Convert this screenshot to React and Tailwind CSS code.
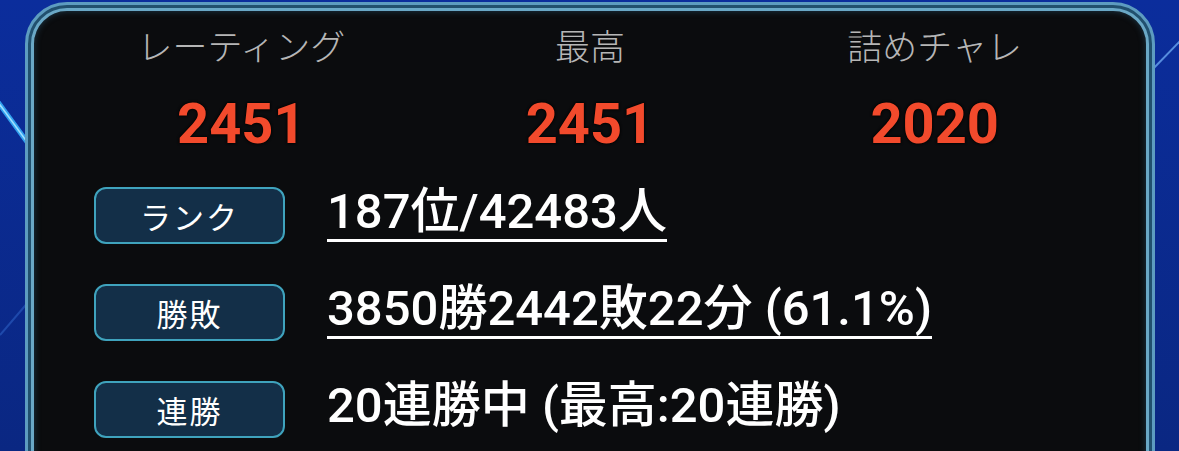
import React from 'react';

const stats = [
  { label: 'レーティング', value: '2451' },
  { label: '最高', value: '2451' },
  { label: '詰めチャレ', value: '2020' },
];

const rows = [
  { label: 'ランク', value: '187位/42483人', link: true },
  { label: '勝敗', value: '3850勝2442敗22分 (61.1%)', link: true },
  { label: '連勝', value: '20連勝中 (最高:20連勝)', link: false },
];

const jp = { fontFamily: '"Noto Sans CJK JP", "Noto Sans", sans-serif' };
const mixed = { fontFamily: 'Roboto, "Noto Sans CJK JP", sans-serif' };

const Backdrop = () => (
  <svg className="absolute inset-0 h-full w-full" viewBox="0 0 1179 451" preserveAspectRatio="none">
    <line x1="-5" y1="98" x2="30" y2="146" stroke="#39b6ff" strokeWidth="5" opacity="0.85" />
    <line x1="-5" y1="98" x2="30" y2="146" stroke="#9fe0ff" strokeWidth="1.5" />
    <line x1="0" y1="335" x2="30" y2="300" stroke="#3d7be0" strokeWidth="2" opacity="0.4" />
    <line x1="1150" y1="72" x2="1185" y2="36" stroke="#6aa6f0" strokeWidth="2" opacity="0.8" />
  </svg>
);

export default function App() {
  return (
    <div className="relative h-[451px] w-[1179px] overflow-hidden bg-gradient-to-b from-[#0b2d9c] to-[#0a2782]">
      <Backdrop />
      <div className="relative ml-[25px] mt-[2px] h-[480px] w-[1130px] rounded-t-[42px] border-[3px] border-[#5d9cc0] bg-[#21506e] p-[3px]">
        <div className="h-full rounded-t-[36px] border-[3px] border-[#6aa8c6] bg-[#0b0c0e] shadow-[inset_0_0_6px_#1d3a4c]">
          <div className="grid grid-cols-3 px-[33px] pt-[13px]">
            {stats.map((s, i) => (
              <div key={s.label} className={`flex flex-col items-center ${i === 2 ? 'pr-[8px]' : ''}`}>
                <div style={jp} className="text-[35px] font-light leading-[42px] text-[#b6b6b6]">
                  {s.label}
                </div>
                <div
                  style={{ fontFamily: 'Roboto, sans-serif' }}
                  className="mt-[30px] text-[56px] font-bold leading-none text-[#f24a2c] [text-shadow:0_0_3px_#000,0_0_2px_#000]"
                >
                  {s.value}
                </div>
              </div>
            ))}
          </div>

          <div className="mt-[35px] flex flex-col gap-[40px] pl-[60px]">
            {rows.map((r) => (
              <div key={r.label} className="flex items-start gap-[42px]">
                <div
                  style={jp}
                  className="flex h-[57px] w-[191px] shrink-0 items-center justify-center rounded-[12px] border-2 border-[#3fa3bd] bg-[#132f48] text-[31px] leading-none tracking-[2px] text-white"
                >
                  {r.label}
                </div>
                <div
                  style={mixed}
                  className={`text-[49px] font-medium leading-none text-white ${
                    r.link ? 'border-b-[3px] border-white pb-[3px]' : ''
                  }`}
                >
                  {r.value}
                </div>
              </div>
            ))}
          </div>
        </div>
      </div>
    </div>
  );
}
